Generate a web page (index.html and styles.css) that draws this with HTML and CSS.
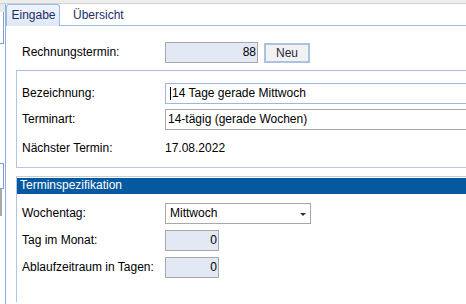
FILE: index.html
```html
<!DOCTYPE html>
<html lang="de">
<head>
    <meta charset="UTF-8">
    <meta name="viewport" content="width=device-width, initial-scale=1.0">
    <title>Rechnungstermin</title>
    <link rel="stylesheet" href="styles.css">
</head>
<body>
    <div class="topbar"></div>
    <div class="window">
        <div class="side">
            <div class="side-top"></div>
            <div class="side-box"></div>
            <div class="side-gap"></div>
            <div class="side-box2"></div>
            <div class="side-grey"></div>
        </div>

        <div class="main">
            <div class="tabbar">
                <div class="tab active">Eingabe</div>
                <div class="tab">Übersicht</div>
            </div>

            <div class="page">
                <div class="row">
                    <span class="lbl">Rechnungstermin:</span>
                    <div class="field num w-mid">88</div>
                    <button class="btn">Neu</button>
                </div>

                <div class="group first">
                    <div class="row">
                        <span class="lbl">Bezeichnung:</span>
                        <div class="field wide focus"><span class="caret"></span>14 Tage gerade Mittwoch</div>
                    </div>
                    <div class="row gap5">
                        <span class="lbl">Terminart:</span>
                        <div class="field wide plain">14-tägig (gerade Wochen)</div>
                    </div>
                    <div class="row gap8">
                        <span class="lbl">Nächster Termin:</span>
                        <span class="value">17.08.2022</span>
                    </div>
                </div>

                <div class="group second">
                    <div class="group-head">Terminspezifikation</div>
                    <div class="row gap9">
                        <span class="lbl">Wochentag:</span>
                        <div class="field select">Mittwoch<span class="arrow"></span></div>
                    </div>
                    <div class="row gap6">
                        <span class="lbl">Tag im Monat:</span>
                        <div class="field num w-small">0</div>
                    </div>
                    <div class="row gap6">
                        <span class="lbl">Ablaufzeitraum in Tagen:</span>
                        <div class="field num w-small">0</div>
                    </div>
                </div>
            </div>
        </div>
    </div>
</body>
</html>
```

FILE: styles.css
```css
body {
    font-family: "Liberation Sans", Arial, sans-serif;
    font-size: 12px;
    color: #000;
    background-color: #fff;
    margin: 0;
    width: 466px;
    height: 304px;
    overflow: hidden;
}
.topbar {
    height: 3px;
    background-color: #ececec;
    border-bottom: 1px solid #d2d2d2;
}
.window {
    display: flex;
    height: 300px;
    overflow: hidden;
}

/* neighbouring panel, only its edge is visible */
.side {
    width: 5px;
    flex-shrink: 0;
}
.side-top {
    height: 8px;
    background-color: #e8e8e8;
}
.side-box {
    width: 3px;
    height: 31px;
    border-right: 1px solid #7b9fd6;
    border-bottom: 1px solid #7b9fd6;
}
.side-gap {
    height: 119px;
}
.side-box2 {
    width: 3px;
    height: 24px;
    border: 1px solid #7b9fd6;
    border-left: none;
}
.side-grey {
    width: 2px;
    height: 27px;
    background-color: #a9a9a9;
}

.main {
    flex: 1;
    min-width: 0;
    overflow: hidden;
    border-left: 1px solid #8fb0e0;
}
.tabbar {
    display: flex;
    align-items: flex-start;
    height: 21px;
    border-bottom: 1px solid #9ab9e3;
}
.tab {
    height: 21px;
    line-height: 21px;
    padding-left: 13px;
    color: #1d2c6b;
    border-top: 1px solid transparent;
}
.tab.active {
    width: 54px;
    box-sizing: border-box;
    padding-left: 1px;
    text-align: center;
    background: linear-gradient(#eef3fa, #dfe8f5);
    border: 1px solid #9ab9e3;
    border-bottom: none;
    border-radius: 3px 3px 0 0;
    margin-bottom: -1px;
    height: 22px;
    position: relative;
}

.page {
    padding: 16px 0 0 16px;
}
.row {
    display: flex;
    align-items: flex-start;
    height: 21px;
    line-height: 21px;
}
.gap5 { margin-top: 5px; }
.gap6 { margin-top: 6px; }
.gap8 { margin-top: 8px; }
.gap9 { margin-top: 9px; }
.lbl {
    width: 143px;
    flex-shrink: 0;
}
.field {
    display: flex;
    align-items: center;
    box-sizing: border-box;
    height: 21px;
    line-height: 19px;
    border: 1px solid #a8a8a8;
    background-color: #fff;
    white-space: nowrap;
    flex-shrink: 0;
}
.field.num {
    justify-content: flex-end;
    background-color: #e2e9f5;
    padding-right: 1px;
}
.w-mid { width: 93px; }
.w-small { width: 54px; padding-right: 2px; }
.field.wide {
    width: 320px;
}
.field.focus {
    border-color: #9cb7e0;
    padding-left: 4px;
}
.field.plain {
    padding-left: 2px;
}
.caret {
    width: 1px;
    height: 13px;
    background-color: #000;
    margin-right: 1px;
}
.field.select {
    width: 146px;
    padding-left: 4px;
}
.arrow {
    margin-left: auto;
    margin-right: 4px;
    margin-top: 1px;
    border-left: 3px solid transparent;
    border-right: 3px solid transparent;
    border-top: 3px solid #333;
}
.btn {
    width: 46px;
    height: 20px;
    margin: 1px 0 0 6px;
    padding: 0;
    font-family: inherit;
    font-size: 12px;
    color: #2a1f3d;
    background-color: #f2f2f2;
    border: 2px solid #a9c1e3;
    cursor: pointer;
}

.group {
    margin: 0 -20px 0 -6px;
    border-left: 1px solid #b3c6df;
    padding-left: 5px;
}
.group.first {
    margin-top: 7px;
    border-top: 1px solid #a9c0df;
    border-bottom: 1px solid #b9c9da;
    padding-top: 12px;
    padding-bottom: 8px;
}
.group.second {
    margin-top: 8px;
    border-top: 1px solid #c3cfdc;
    padding-top: 1px;
    height: 126px;
    box-sizing: border-box;
}
.group-head {
    margin-left: -5px;
    padding: 0 0 2px 3px;
    line-height: 14px;
    color: #fff;
    background-color: #0459a0;
}
```
